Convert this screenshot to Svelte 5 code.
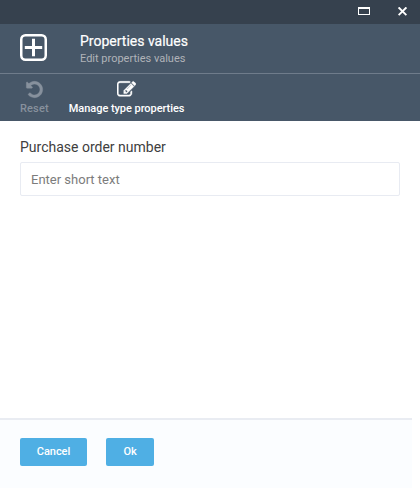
<script>
  let value = $state('');
</script>

<div class="dialog">
  <div class="titlebar">
    <button class="win" aria-label="Maximize"><span></span></button>
    <button class="win" aria-label="Close">
      <svg width="9" height="9" viewBox="0 0 9 9"><path d="M.6.4 8.4 8.2M8.4.4.6 8.2" stroke="#fff" stroke-width="1.9" /></svg>
    </button>
  </div>
  <header>
    <svg class="plus" width="27" height="27" viewBox="0 0 27 27" fill="none" stroke="#fff">
      <rect x="1.25" y="1.25" width="24.5" height="24.5" rx="4.2" stroke-width="2.5" />
      <path d="M13.5 4.8v17.4M4.8 13.5h17.4" stroke-width="3" />
    </svg>
    <div class="heading">
      <h1>Properties values</h1>
      <p>Edit properties values</p>
    </div>
  </header>
  <div class="toolbar">
    <button class="tool disabled">
      <svg width="19" height="19" viewBox="0 0 1792 1792"><path d="M1664 896q0 156-61 298t-164 245-245 164-298 61q-172 0-327-72.5t-264-204.5q-7-10-6.5-22.5t8.5-20.5l137-138q10-9 25-9 16 2 23 12 73 95 179 147t225 52q104 0 198.5-40.5t163.5-109.5 109.5-163.5 40.5-198.5-40.5-198.5-109.5-163.5-163.5-109.5-198.5-40.5q-98 0-188 35.5t-160 101.5l137 138q31 30 14 69-17 40-59 40h-448q-26 0-45-19t-19-45v-448q0-42 40-59 39-17 69 14l130 129q107-101 244.5-156.5t284.5-55.5q156 0 298 61t245 164 164 245 61 298z" /></svg>
      <span>Reset</span>
    </button>
    <button class="tool manage">
      <svg width="19" height="19" viewBox="0 0 1792 1792"><path d="M888 1184l116-116-152-152-116 116v56h96v96h56zm440-720q-16-16-33 1l-350 350q-17 17-1 33t33-1l350-350q17-17 1-33zm80 594v190q0 119-84.5 203.5t-203.5 84.5h-832q-119 0-203.5-84.5t-84.5-203.5v-832q0-119 84.5-203.5t203.5-84.5h832q63 0 117 25 15 7 18 23 3 17-9 29l-49 49q-14 14-32 8-23-6-45-6h-832q-66 0-113 47t-47 113v832q0 66 47 113t113 47h832q66 0 113-47t47-113v-126q0-13 9-22l64-64q15-15 35-7t20 29zm-96-738l288 288-672 672h-288v-288zm444 132l-92 92-288-288 92-92q28-28 68-28t68 28l152 152q28 28 28 68t-28 68z" /></svg>
      <span>Manage type properties</span>
    </button>
  </div>
  <main>
    <label for="po">Purchase order number</label>
    <input id="po" placeholder="Enter short text" bind:value />
  </main>
  <footer>
    <button class="action cancel">Cancel</button>
    <button class="action">Ok</button>
  </footer>
</div>

<style>
  .dialog {
    width: 420px;
    height: 496px;
    display: flex;
    flex-direction: column;
    background: #fff;
    font-family: Roboto, sans-serif;
    box-sizing: border-box;
    padding-bottom: 8px;
    overflow: hidden;
  }
  .dialog * { box-sizing: border-box; }
  button {
    font-family: inherit;
    border: 0;
    padding: 0;
    margin: 0;
    background: none;
  }
  .titlebar {
    height: 24px;
    flex: none;
    background: #36414e;
    display: flex;
    justify-content: flex-end;
    padding: 0 13px 0 0;
    gap: 28px;
  }
  .win {
    display: flex;
    align-items: flex-start;
    padding-top: 7px;
  }
  .win span {
    width: 12px;
    height: 8px;
    border: 1px solid #fff;
    border-top-width: 2px;
  }
  header {
    height: 50px;
    flex: none;
    background: #475768;
    border-bottom: 1px solid #6f7c8b;
    display: flex;
    padding: 10px 20px 0;
  }
  .heading { margin-left: 33px; }
  h1 {
    margin: -2px 0 0;
    font-size: 14px;
    line-height: 18px;
    font-weight: 400;
    color: #fff;
    -webkit-text-stroke: .2px #fff;
  }
  p {
    margin: 1px 0 0;
    font-size: 11px;
    line-height: 15px;
    color: #b0b3b8;
  }
  .toolbar {
    height: 47px;
    flex: none;
    background: #475768;
    display: flex;
    align-items: flex-start;
    gap: 20px;
    padding: 6px 20px 0;
  }
  .tool {
    display: flex;
    flex-direction: column;
    align-items: center;
    color: #fff;
    font-size: 11px;
    line-height: 15px;
    font-weight: 500;
    white-space: nowrap;
  }
  .tool svg {
    fill: currentColor;
    stroke: currentColor;
    stroke-width: 40;
  }
  .tool span { margin-top: 2px; }
  .manage { letter-spacing: -.05px; }
  .disabled {
    color: #87919d;
    letter-spacing: .15px;
  }
  main {
    flex: 1;
    padding: 17px 20px 0;
  }
  label {
    display: block;
    font-size: 14px;
    line-height: 18px;
    color: #404040;
  }
  input {
    display: block;
    width: 380px;
    height: 34px;
    margin-top: 6px;
    padding: 0 10px;
    border: 1px solid #e8ebf2;
    border-radius: 2px;
    font: 13px Roboto, sans-serif;
    color: #333;
    outline: none;
  }
  input::placeholder { color: #7c7c7c; opacity: 1; }
  footer {
    width: 412px;
    height: 70px;
    flex: none;
    border-top: 2px solid #e9ecf2;
    background: #fbfdff;
    display: flex;
    gap: 19px;
    padding: 18px 20px 0;
  }
  .action {
    width: 48px;
    height: 28px;
    border-radius: 2px;
    background: #4fafe4;
    color: #fff;
    font-size: 11px;
    font-weight: 500;
    letter-spacing: -.05px;
    line-height: 26px;
    padding-bottom: 1px;
  }
  .cancel { width: 67px; }
</style>
